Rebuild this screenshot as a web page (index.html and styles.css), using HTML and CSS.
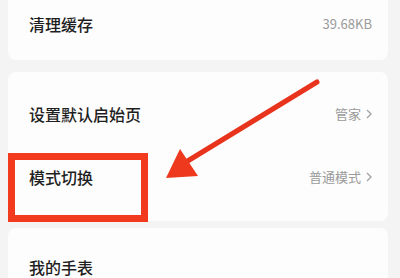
FILE: index.html
```html
<!DOCTYPE html>
<html lang="zh-CN">
<head>
    <meta charset="UTF-8">
    <meta name="viewport" content="width=device-width, initial-scale=1.0">
    <title>设置</title>
    <link rel="stylesheet" href="styles.css">
</head>
<body>
    <div class="settings">
        <div class="group group-cache">
            <div class="row">
                <span class="row-title">清理缓存</span>
                <span class="row-value">39.68KB</span>
            </div>
        </div>

        <div class="group">
            <div class="row">
                <span class="row-title">设置默认启始页</span>
                <span class="row-value">管家
                    <svg class="chevron" viewBox="0 0 6 10"><polyline points="1,1 5,5 1,9" /></svg>
                </span>
            </div>
            <div class="row">
                <span class="row-title">模式切换</span>
                <span class="row-value">普通模式
                    <svg class="chevron" viewBox="0 0 6 10"><polyline points="1,1 5,5 1,9" /></svg>
                </span>
            </div>
        </div>

        <div class="group group-watch">
            <div class="row">
                <span class="row-title">我的手表</span>
            </div>
        </div>
    </div>

    <!-- annotation drawn on top of the screenshot -->
    <svg class="annotation" viewBox="0 0 400 278">
        <rect x="11.5" y="156.5" width="133" height="62" fill="none" stroke="#f23a1e" stroke-width="7" />
        <line x1="317" y1="82" x2="186" y2="162" stroke="#e8341c" stroke-width="5" stroke-linecap="round" />
        <polygon points="166,178 180,149 198,176" fill="#ee391e" />
    </svg>
</body>
</html>
```

FILE: styles.css
```css
* {
    box-sizing: border-box;
}
body {
    margin: 0;
    height: 278px;
    overflow: hidden;
    background-color: #f4f4f4;
    font-family: "Noto Sans CJK SC", "Noto Sans", sans-serif;
}
.settings {
    padding: 0 12px 0 8px;
}
.group {
    background-color: #fdfdfd;
    border-radius: 8px;
    padding: 10px 0 13px;
    margin-top: 12px;
}
.group-cache {
    margin-top: -18px;
    padding-bottom: 5px;
}
.group-watch {
    margin-top: 7px;
    padding-top: 7px;
}
.row {
    display: flex;
    justify-content: space-between;
    align-items: center;
    height: 63px;
    padding: 0 16px 0 21px;
}
.row-title {
    font-size: 16px;
    font-weight: 500;
    color: #1f1f1f;
}
.row-value {
    display: flex;
    align-items: center;
    gap: 5px;
    font-size: 13px;
    color: #9a9a9a;
}
.chevron {
    width: 6px;
    height: 10px;
    fill: none;
    stroke: #a5a5a5;
    stroke-width: 1.4;
}
.annotation {
    position: absolute;
    top: 0;
    left: 0;
    width: 400px;
    height: 278px;
}
```
